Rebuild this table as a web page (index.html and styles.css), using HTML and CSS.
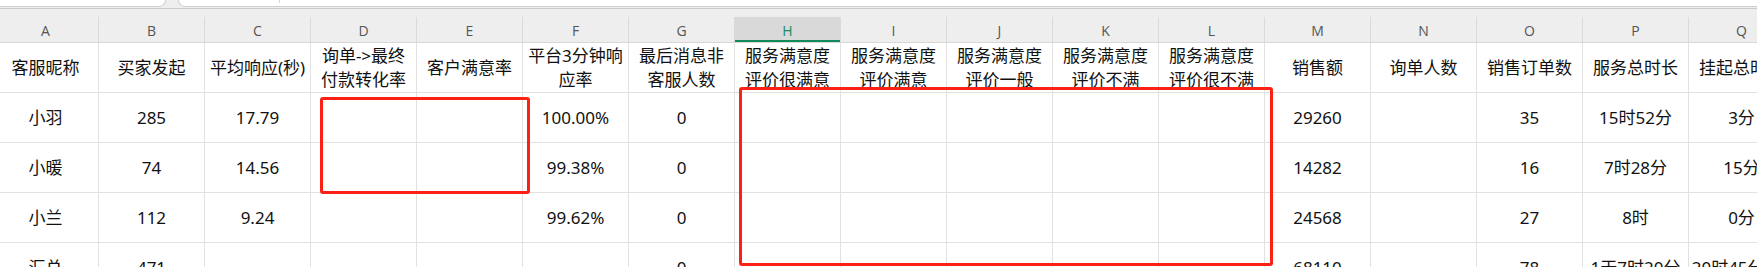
FILE: index.html
```html
<!DOCTYPE html>
<html lang="zh-CN">
<head>
<meta charset="utf-8">
<title>Sheet</title>
<link rel="stylesheet" href="styles.css">
</head>
<body>
<div class="app">
  <div class="topbar">
    <div class="namebox"></div>
    <div class="fxbox"><span class="tick"></span></div>
  </div>
  <div class="sheet">
    <div class="row colheads">
      <div class="ch">A</div><div class="ch">B</div><div class="ch">C</div><div class="ch">D</div>
      <div class="ch">E</div><div class="ch">F</div><div class="ch">G</div><div class="ch active">H</div>
      <div class="ch">I</div><div class="ch">J</div><div class="ch">K</div><div class="ch">L</div>
      <div class="ch">M</div><div class="ch">N</div><div class="ch">O</div><div class="ch">P</div>
      <div class="ch">Q</div>
    </div>
    <div class="row">
      <div class="c">客服昵称</div><div class="c">买家发起</div><div class="c">平均响应(秒)</div>
      <div class="c">询单-&gt;最终<br>付款转化率</div><div class="c">客户满意率</div>
      <div class="c">平台3分钟响<br>应率</div><div class="c">最后消息非<br>客服人数</div>
      <div class="c">服务满意度<br>评价很满意</div><div class="c">服务满意度<br>评价满意</div>
      <div class="c">服务满意度<br>评价一般</div><div class="c">服务满意度<br>评价不满</div>
      <div class="c">服务满意度<br>评价很不满</div><div class="c">销售额</div><div class="c">询单人数</div>
      <div class="c">销售订单数</div><div class="c">服务总时长</div><div class="c">挂起总时长</div>
    </div>
    <div class="row">
      <div class="c">小羽</div><div class="c">285</div><div class="c">17.79</div><div class="c"></div><div class="c"></div>
      <div class="c">100.00%</div><div class="c">0</div><div class="c"></div><div class="c"></div><div class="c"></div>
      <div class="c"></div><div class="c"></div><div class="c">29260</div><div class="c"></div><div class="c">35</div>
      <div class="c">15时52分</div><div class="c">3分</div>
    </div>
    <div class="row">
      <div class="c">小暖</div><div class="c">74</div><div class="c">14.56</div><div class="c"></div><div class="c"></div>
      <div class="c">99.38%</div><div class="c">0</div><div class="c"></div><div class="c"></div><div class="c"></div>
      <div class="c"></div><div class="c"></div><div class="c">14282</div><div class="c"></div><div class="c">16</div>
      <div class="c">7时28分</div><div class="c">15分</div>
    </div>
    <div class="row">
      <div class="c">小兰</div><div class="c">112</div><div class="c">9.24</div><div class="c"></div><div class="c"></div>
      <div class="c">99.62%</div><div class="c">0</div><div class="c"></div><div class="c"></div><div class="c"></div>
      <div class="c"></div><div class="c"></div><div class="c">24568</div><div class="c"></div><div class="c">27</div>
      <div class="c">8时</div><div class="c">0分</div>
    </div>
    <div class="row">
      <div class="c">汇总</div><div class="c">471</div><div class="c"></div><div class="c"></div><div class="c"></div>
      <div class="c"></div><div class="c">0</div><div class="c"></div><div class="c"></div><div class="c"></div>
      <div class="c"></div><div class="c"></div><div class="c">68110</div><div class="c"></div><div class="c">78</div>
      <div class="c">1天7时20分</div><div class="c">20时45分3秒</div>
    </div>
  </div>
  <div class="mark mark-a"></div>
  <div class="mark mark-b"></div>
</div>
</body>
</html>
```

FILE: styles.css
```css
html, body {
  margin: 0;
  padding: 0;
  background: #ffffff;
  overflow: hidden;
}
.app {
  position: relative;
  width: 1757px;
  height: 267px;
  overflow: hidden;
  font-family: "Noto Sans", "Noto Sans CJK SC", sans-serif;
  color: #111111;
}
.topbar {
  display: flex;
  gap: 12px;
  height: 8px;
  background: #eeeeee;
  border-bottom: 1px solid #c9c9c9;
  margin-left: -12px;
}
.namebox, .fxbox {
  background: #ffffff;
  border: 1px solid #cfcfcf;
  border-top: none;
  border-radius: 0 0 7px 7px;
  height: 7px;
  box-sizing: border-box;
}
.namebox { width: 178px; }
.fxbox { flex: 1; position: relative; margin-right: -12px; }
.tick {
  position: absolute;
  left: 100px;
  top: 0;
  width: 1px;
  height: 3px;
  background: #d6d6d6;
}
.sheet {
  margin-left: -7px;
}
.row {
  display: grid;
  grid-template-columns: repeat(17, 106px);
  height: 50px;
  border-bottom: 1px solid #e1e1e1;
  box-sizing: border-box;
}
.colheads {
  height: 34px;
  padding-top: 8px;
  background: #eeeeee;
  border-bottom: 1px solid #d8d8d8;
}
.ch {
  border-right: 1px solid #dadada;
  display: flex;
  align-items: center;
  justify-content: center;
  font-family: "Open Sans", "Noto Sans", sans-serif;
  font-size: 14px;
  color: #555555;
  padding-top: 2px;
  box-sizing: border-box;
}
.ch.active {
  background: #d9d9d9;
  color: #1a8a5e;
  box-shadow: inset 0 -2px 0 #138a5c;
}
.c {
  border-right: 1px solid #e1e1e1;
  display: flex;
  align-items: center;
  justify-content: center;
  text-align: center;
  font-size: 17px;
  line-height: 24px;
  white-space: nowrap;
  overflow: hidden;
}
.mark {
  position: absolute;
  border: 3px solid #fb2215;
  border-radius: 3px;
  box-sizing: border-box;
}
.mark-a {
  left: 320px;
  top: 97px;
  width: 210px;
  height: 97px;
}
.mark-b {
  left: 739px;
  top: 87px;
  width: 534px;
  height: 179px;
}
```
